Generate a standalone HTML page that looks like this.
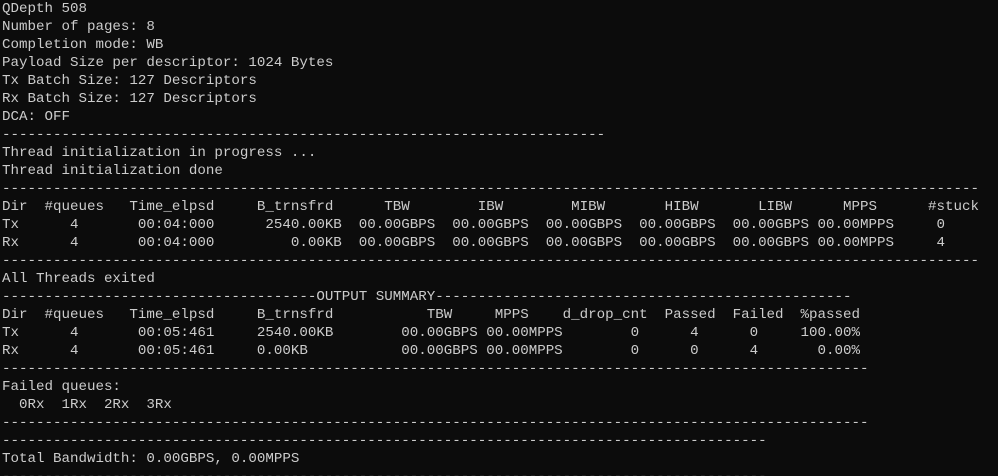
<!DOCTYPE html>
<html><head><meta charset="utf-8"><style>
html,body{margin:0;padding:0;background:#0c0c0c;width:998px;height:476px;overflow:hidden}
pre{margin:0;padding:0 0 0 2px;font-family:"Liberation Mono",monospace;font-size:14.17px;line-height:18px;color:#cccccc;white-space:pre}
</style></head><body><pre>QDepth 508
Number of pages: 8
Completion mode: WB
Payload Size per descriptor: 1024 Bytes
Tx Batch Size: 127 Descriptors
Rx Batch Size: 127 Descriptors
DCA: OFF
-----------------------------------------------------------------------
Thread initialization in progress ...
Thread initialization done
-------------------------------------------------------------------------------------------------------------------
Dir  #queues   Time_elpsd     B_trnsfrd      TBW        IBW        MIBW       HIBW       LIBW      MPPS      #stuck
Tx      4       00:04:000      2540.00KB  00.00GBPS  00.00GBPS  00.00GBPS  00.00GBPS  00.00GBPS 00.00MPPS     0
Rx      4       00:04:000         0.00KB  00.00GBPS  00.00GBPS  00.00GBPS  00.00GBPS  00.00GBPS 00.00MPPS     4
-------------------------------------------------------------------------------------------------------------------
All Threads exited
-------------------------------------OUTPUT SUMMARY-------------------------------------------------
Dir  #queues   Time_elpsd     B_trnsfrd           TBW     MPPS    d_drop_cnt  Passed  Failed  %passed
Tx      4       00:05:461     2540.00KB        00.00GBPS 00.00MPPS        0      4      0     100.00%
Rx      4       00:05:461     0.00KB           00.00GBPS 00.00MPPS        0      0      4       0.00%
------------------------------------------------------------------------------------------------------
Failed queues:
  0Rx  1Rx  2Rx  3Rx
------------------------------------------------------------------------------------------------------
------------------------------------------------------------------------------------------
Total Bandwidth: 0.00GBPS, 0.00MPPS
------------------------------------------------------------------------------------------</pre></body></html>
